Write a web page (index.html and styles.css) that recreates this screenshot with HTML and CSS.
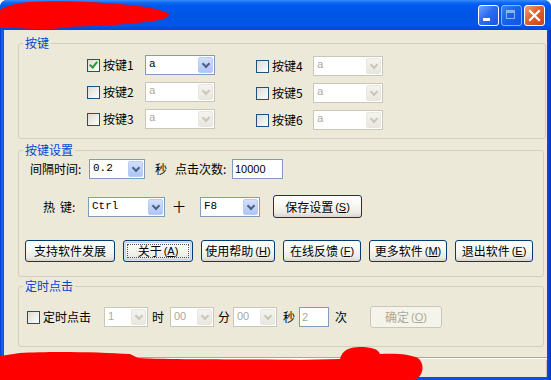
FILE: index.html
```html
<!DOCTYPE html>
<html>
<head>
<meta charset="utf-8">
<title>按键精灵</title>
<link rel="stylesheet" href="styles.css">
</head>
<body>
<div class="window">
  <div class="titlebar">
    <div class="title-buttons">
      <div class="tb tb-min"><span class="min-bar"></span></div>
      <div class="tb tb-max"><span class="max-box"></span></div>
      <div class="tb tb-close">
        <svg width="21" height="21" viewBox="0 0 21 21"><path d="M6 6 L15 15 M15 6 L6 15" stroke="#fff" stroke-width="2.2" stroke-linecap="square" fill="none"/></svg>
      </div>
    </div>
  </div>
  <div class="frame">
    <div class="client">
      <fieldset class="group g1">
        <legend>按键</legend>
        <div class="keys">
          <div class="keycol">
            <div class="keyrow"><span class="chk checked"></span><span class="klabel">按键1</span><span class="combo w70"><span class="val">a</span><span class="arrow"></span></span></div>
            <div class="keyrow"><span class="chk"></span><span class="klabel">按键2</span><span class="combo w70 off"><span class="val">a</span><span class="arrow"></span></span></div>
            <div class="keyrow"><span class="chk"></span><span class="klabel">按键3</span><span class="combo w70 off"><span class="val">a</span><span class="arrow"></span></span></div>
          </div>
          <div class="keycol right">
            <div class="keyrow"><span class="chk"></span><span class="klabel k2">按键4</span><span class="combo w70 off"><span class="val">a</span><span class="arrow"></span></span></div>
            <div class="keyrow"><span class="chk"></span><span class="klabel k2">按键5</span><span class="combo w70 off"><span class="val">a</span><span class="arrow"></span></span></div>
            <div class="keyrow"><span class="chk"></span><span class="klabel k2">按键6</span><span class="combo w70 off"><span class="val">a</span><span class="arrow"></span></span></div>
          </div>
        </div>
      </fieldset>

      <fieldset class="group g2">
        <legend>按键设置</legend>
        <div class="g2-body">
          <div class="row r-interval">
            <span class="lbl w59">间隔时间:</span>
            <span class="combo w56"><span class="val">0.2</span><span class="arrow"></span></span>
            <span class="lbl ml10 w20">秒</span>
            <span class="lbl w57">点击次数:</span>
            <span class="textbox w51">10000</span>
          </div>
          <div class="row r-hotkey">
            <span class="lbl ml18 w45">热<span class="sp"></span>键:</span>
            <span class="combo w77"><span class="val">Ctrl</span><span class="arrow"></span></span>
            <span class="lbl ml8 w27">十</span>
            <span class="combo w60"><span class="val">F8</span><span class="arrow"></span></span>
            <span class="button ml13 w89 h23">保存设置<span class="acc">(<u>S</u>)</span></span>
          </div>
          <div class="row r-buttons">
            <span class="button w90">支持软件发展</span>
            <span class="button w70 focus">关于<span class="acc">(<u>A</u>)</span></span>
            <span class="button w74">使用帮助<span class="acc">(<u>H</u>)</span></span>
            <span class="button w78">在线反馈<span class="acc">(<u>F</u>)</span></span>
            <span class="button w78">更多软件<span class="acc">(<u>M</u>)</span></span>
            <span class="button w78">退出软件<span class="acc">(<u>E</u>)</span></span>
          </div>
        </div>
      </fieldset>

      <fieldset class="group g3">
        <legend>定时点击</legend>
        <div class="g3-body">
          <div class="row r-timer">
            <span class="chk"></span>
            <span class="lbl ml3 w61">定时点击</span>
            <span class="combo w44 off"><span class="val sans">1</span><span class="arrow"></span></span>
            <span class="lbl ml4 w18">时</span>
            <span class="combo w44 off"><span class="val sans">00</span><span class="arrow"></span></span>
            <span class="lbl ml4 w15">分</span>
            <span class="combo w44 off"><span class="val sans">00</span><span class="arrow"></span></span>
            <span class="lbl ml6 w16">秒</span>
            <span class="textbox w30 off">2</span>
            <span class="lbl ml6 w35">次</span>
            <span class="button w72 disabled">确定<span class="acc">(<u>O</u>)</span></span>
          </div>
        </div>
      </fieldset>

      <div class="statusbar"><div class="status-panel"></div></div>
    </div>
  </div>

  <svg class="scribble scribble-title" width="172" height="32" viewBox="0 0 172 32">
    <path d="M0,10 C6,6 15,3 30,2 C60,0 100,2 130,5 C150,7 163,10 169,14 C170,18 162,20 146,22 C120,25 92,26 68,27 C56,29 45,30 34,29 C20,28 8,28 0,28 Z" fill="#ff0000"/>
  </svg>
  <svg class="scribble scribble-bottom" width="430" height="36" viewBox="0 344 430 36">
    <path d="M0,356 L20,353 C50,351 100,352 130,354 L138,358 C180,360 250,359 300,360 L340,359 C342,351 348,347 360,347 C372,347 378,349 380,354 C395,353 410,354 418,358 C424,363 424,372 418,378 L415,380 L0,380 Z" fill="#ff0000"/>
  </svg>
</div>
</body>
</html>
```

FILE: styles.css
```css
html, body {
  margin: 0;
  padding: 0;
  background: #ffffff;
}

body {
  font-family: "Noto Sans CJK SC", "Liberation Sans", sans-serif;
  font-size: 12px;
  color: #000;
}

.window {
  position: relative;
  width: 551px;
  height: 380px;
  display: flex;
  flex-direction: column;
  background: #0A50DE;
  border-radius: 7px 7px 0 0;
  overflow: hidden;
}

.titlebar {
  height: 30px;
  flex: none;
  display: flex;
  justify-content: flex-end;
  align-items: flex-start;
  background: linear-gradient(#3A8CF9 0px, #0A66F4 3px, #0058EE 6px, #0054E3 16px, #0057EC 25px, #0048D6 30px);
}

.title-buttons {
  display: flex;
  gap: 2px;
  padding: 5px 6px 0 0;
}

.tb {
  width: 21px;
  height: 21px;
  box-sizing: border-box;
  border: 1px solid #fff;
  border-radius: 3px;
  position: relative;
  background: linear-gradient(135deg, #6FA4FF 0%, #2D6CF0 45%, #1A55DC 100%);
}

.tb-max {
  opacity: 0.55;
}

.tb-close {
  background: linear-gradient(135deg, #F4A07C 0%, #E2602F 45%, #C8441A 100%);
}

.tb-close svg {
  position: absolute;
  left: -1px;
  top: -1px;
}

.min-bar {
  position: absolute;
  left: 4px;
  top: 12px;
  width: 7px;
  height: 3px;
  background: #fff;
}

.max-box {
  position: absolute;
  left: 4px;
  top: 4px;
  width: 9px;
  height: 9px;
  box-sizing: border-box;
  border: 1px solid #fff;
  border-top-width: 3px;
}

.frame {
  flex: 1;
  display: flex;
  padding: 0 4px 3px 4px;
  background: linear-gradient(90deg, #0834C8 0px, #166AEE 2px, #0A50DE 4px, #0A50DE 547px, #0B3FCF 549px, #0830B8 551px);
}

.client {
  flex: 1;
  display: flex;
  flex-direction: column;
  background: #ECE9D8;
}

/* group boxes */
.group {
  margin: 0;
  padding: 0;
  border: 1px solid #D0D0BF;
  border-radius: 3px;
  min-width: 0;
}

.group legend {
  padding: 0 2px;
  margin-left: 4px;
  height: 14px;
  line-height: 14px;
  color: #0046D5;
}

.g1 {
  margin: 6px 1px 0 14px;
}

.g2 {
  margin: 4px 3px 0 14px;
}

.g3 {
  margin: 2px 3px 0 14px;
}

.keys {
  display: flex;
  padding: 5px 0 8px 68px;
}

.keycol {
  display: flex;
  flex-direction: column;
  gap: 7px;
}

.keycol.right {
  margin-left: 41px;
  padding-top: 1px;
}

.keyrow {
  display: flex;
  align-items: center;
  height: 20px;
}

.klabel {
  width: 42px;
  margin-left: 3px;
  line-height: 14px;
}

.klabel.k2 {
  width: 41px;
}

/* checkbox */
.chk {
  width: 13px;
  height: 13px;
  box-sizing: border-box;
  border: 1px solid #1C5180;
  background: linear-gradient(135deg, #DCDCD7 0%, #F0F0EC 60%, #FFFFFF 100%);
  position: relative;
  flex: none;
}

.chk.checked::after {
  content: "";
  position: absolute;
  left: 3px;
  top: 0px;
  width: 3px;
  height: 6px;
  border-right: 2px solid #21A121;
  border-bottom: 2px solid #21A121;
  transform: rotate(40deg);
}

/* combo box */
.combo {
  display: flex;
  height: 20px;
  box-sizing: border-box;
  border: 1px solid #7F9DB9;
  background: #fff;
  flex: none;
}

.combo .val {
  flex: 1;
  padding-left: 3px;
  font-family: "Liberation Mono", monospace;
  font-size: 11px;
  line-height: 17px;
  overflow: hidden;
}

.combo .val.sans {
  font-family: "Liberation Sans", sans-serif;
  font-size: 11px;
}

.combo .arrow {
  width: 15px;
  margin: 1px;
  box-sizing: border-box;
  border: 1px solid #B9CCF7;
  border-radius: 2px;
  background: linear-gradient(#D3E0FD 0%, #BFD2FB 50%, #AFC5F5 100%);
  position: relative;
}

.combo .arrow::after {
  content: "";
  position: absolute;
  left: 4px;
  top: 3px;
  width: 4px;
  height: 4px;
  border-right: 2px solid #4D6185;
  border-bottom: 2px solid #4D6185;
  transform: rotate(45deg);
}

.combo.off {
  border-color: #C9C7BA;
}

.combo.off .val {
  color: #ACA899;
}

.combo.off .arrow {
  border-color: #E8E6DE;
  background: linear-gradient(#F4F3EE, #E9E7DF);
}

.combo.off .arrow::after {
  border-color: #C9C7BA;
}

/* text box */
.textbox {
  height: 20px;
  box-sizing: border-box;
  border: 1px solid #7F9DB9;
  background: #fff;
  padding-left: 2px;
  font-family: "Liberation Sans", sans-serif;
  font-size: 11px;
  line-height: 18px;
  flex: none;
}

.textbox.off {
  color: #ACA899;
}

/* buttons */
.button {
  height: 22px;
  box-sizing: border-box;
  border: 1px solid #003C74;
  border-radius: 3px;
  background: linear-gradient(#FFFFFF 0%, #F8F8F4 40%, #ECEBE5 80%, #D8D4CA 100%);
  display: flex;
  align-items: center;
  justify-content: center;
  line-height: 14px;
  flex: none;
  position: relative;
}

.button .acc {
  margin-left: 2px;
  font-family: "Liberation Sans", sans-serif;
  font-size: 11px;
}

.button.focus {
  box-shadow: inset 0 0 0 1px #CEE7FF, inset 0 0 0 2px #BCD4F6;
}

.button.focus::after {
  content: "";
  position: absolute;
  left: 3px;
  top: 3px;
  right: 3px;
  bottom: 3px;
  border: 1px dotted #555;
}

.button.disabled {
  border-color: #C9C7BA;
  background: #F5F4EA;
  color: #ACA899;
}

.h23 {
  height: 23px;
}

/* rows */
.row {
  display: flex;
  align-items: center;
}

.lbl {
  line-height: 14px;
  flex: none;
  white-space: nowrap;
}

.sp {
  display: inline-block;
  width: 5px;
}

.g2-body {
  padding: 2px 0 14px 6px;
}

.r-interval {
  height: 20px;
  padding-left: 5px;
}

.r-hotkey {
  height: 23px;
  margin-top: 16px;
}

.r-buttons {
  height: 22px;
  margin-top: 22px;
  gap: 8px;
}

.g3-body {
  padding: 13px 0 18px 8px;
}

.r-timer {
  height: 22px;
}

/* widths and margins */
.w15 { width: 15px; }
.w16 { width: 16px; }
.w18 { width: 18px; }
.w20 { width: 20px; }
.w27 { width: 27px; }
.w30 { width: 30px; }
.w35 { width: 35px; }
.w44 { width: 44px; }
.w45 { width: 45px; }
.w51 { width: 51px; }
.w56 { width: 56px; }
.w57 { width: 57px; }
.w59 { width: 59px; }
.w60 { width: 60px; }
.w61 { width: 61px; }
.w70 { width: 70px; }
.w72 { width: 72px; }
.w74 { width: 74px; }
.w77 { width: 77px; }
.w78 { width: 78px; }
.w89 { width: 89px; }
.w90 { width: 90px; }

.ml3 { margin-left: 3px; }
.ml4 { margin-left: 4px; }
.ml6 { margin-left: 6px; }
.ml8 { margin-left: 8px; }
.ml10 { margin-left: 10px; }
.ml13 { margin-left: 13px; }
.ml18 { margin-left: 18px; }

/* status bar */
.statusbar {
  margin-top: auto;
  height: 19px;
  border-top: 1px solid #ACA899;
  box-shadow: inset 0 1px #FFFFFF;
  display: flex;
  justify-content: flex-end;
}

.status-panel {
  flex: 1;
  margin: 2px 0 0 2px;
  border-right: 1px solid #C5C2B2;
}

/* red redaction scribbles drawn over the window */
.scribble {
  position: absolute;
  left: 0;
  pointer-events: none;
}

.scribble-title {
  top: 0;
}

.scribble-bottom {
  top: 344px;
}
```
